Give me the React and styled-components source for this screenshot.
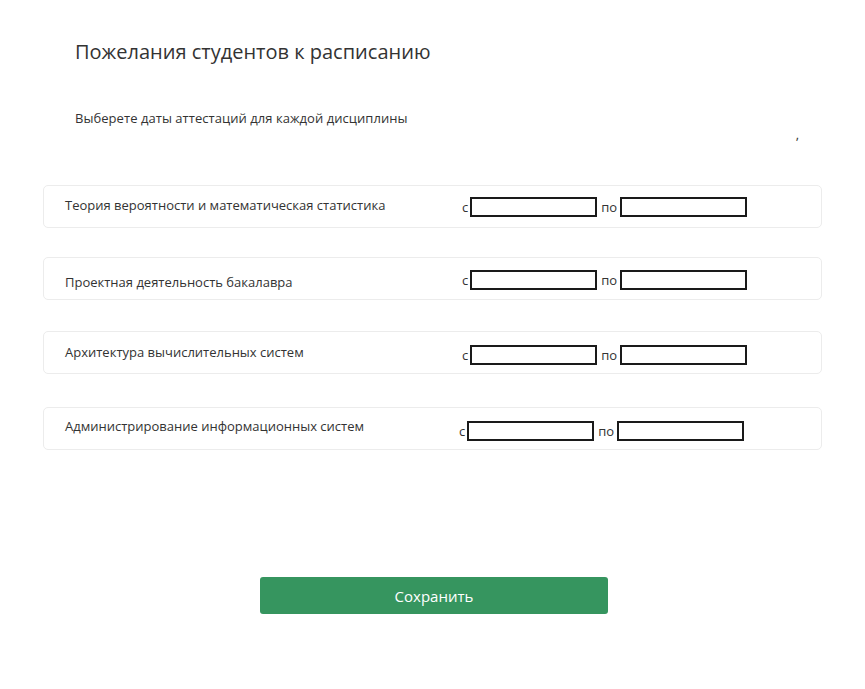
import React from "react";
import styled, { createGlobalStyle } from "styled-components";

const Global = createGlobalStyle`
  html, body { margin: 0; padding: 0; background: #ffffff; }
  body { font-family: "Open Sans", "Noto Sans", sans-serif; color: #333; }
`;

const Page = styled.div`
  width: 865px;
  min-height: 689px;
  box-sizing: border-box;
  padding: 38px 0 0 43px;
`;

const Header = styled.div`
  padding-left: 32px;
  width: 757px;
`;

const Title = styled.h1`
  margin: 0;
  font-size: 20px;
  line-height: 27px;
  font-weight: 400;
  color: #333;
`;

const Subtitle = styled.p`
  margin: 44px 0 0;
  font-size: 13px;
  line-height: 18px;
  letter-spacing: 0.05px;
  color: #333;
`;

const Comma = styled.div`
  font-size: 13px;
  line-height: 18px;
  text-align: right;
  padding-right: 33px;
  margin-top: -2px;
  color: #333;
`;

const List = styled.div`
  display: flex;
  flex-direction: column;
  width: 779px;
`;

const Card = styled.div`
  box-sizing: border-box;
  height: 43px;
  margin-top: ${(p) => p.$gap}px;
  border: 1px solid #ececec;
  border-radius: 5px;
  display: grid;
  grid-template-columns: ${(p) => p.$col}px auto;
  align-items: center;
  padding-left: 21px;
`;

const Label = styled.span`
  font-size: 13px;
  line-height: 18px;
  color: #333;
  transform: translateY(${(p) => p.$dy}px);
`;

const Dates = styled.div`
  display: flex;
  align-items: center;
  font-size: 13px;
  color: #333;
  transform: translateY(${(p) => p.$dy}px);
`;

const Word = styled.span`
  margin-right: ${(p) => p.$mr}px;
  margin-left: ${(p) => p.$ml}px;
  line-height: 18px;
`;

const DateInput = styled.input`
  box-sizing: border-box;
  width: 127px;
  height: 20px;
  border: 2px solid #1a1a1a;
  border-radius: 0;
  padding: 0 4px;
  margin: 0;
  background: #fff;
  font-family: inherit;
  font-size: 13px;
`;

const Footer = styled.div`
  width: 779px;
  display: flex;
  justify-content: center;
  margin-top: 127px;
`;

const SaveButton = styled.button`
  width: 348px;
  height: 37px;
  margin-left: 3px;
  border: none;
  border-radius: 3px;
  background: #36955f;
  color: #ffffff;
  font-family: inherit;
  font-size: 15px;
  cursor: pointer;
`;

const subjects = [
  { name: "Теория вероятности и математическая статистика", gap: 42, col: 397, ldy: -2, ddy: 0 },
  { name: "Проектная деятельность бакалавра", gap: 29, col: 397, ldy: 3, ddy: 1 },
  { name: "Архитектура вычислительных систем", gap: 31, col: 397, ldy: -1, ddy: 2 },
  { name: "Администрирование информационных систем", gap: 33, col: 394, ldy: -3, ddy: 2 },
];

export default function App() {
  return (
    <>
      <Global />
      <Page>
        <Header>
          <Title>Пожелания студентов к расписанию</Title>
          <Subtitle>Выберете даты аттестаций для каждой дисциплины</Subtitle>
          <Comma>,</Comma>
        </Header>
        <List>
          {subjects.map((s) => (
            <Card key={s.name} $gap={s.gap} $col={s.col}>
              <Label $dy={s.ldy}>{s.name}</Label>
              <Dates $dy={s.ddy}>
                <Word $mr={2} $ml={0}>с</Word>
                <DateInput type="text" />
                <Word $mr={3} $ml={4}>по</Word>
                <DateInput type="text" />
              </Dates>
            </Card>
          ))}
        </List>
        <Footer>
          <SaveButton type="button">Сохранить</SaveButton>
        </Footer>
      </Page>
    </>
  );
}
